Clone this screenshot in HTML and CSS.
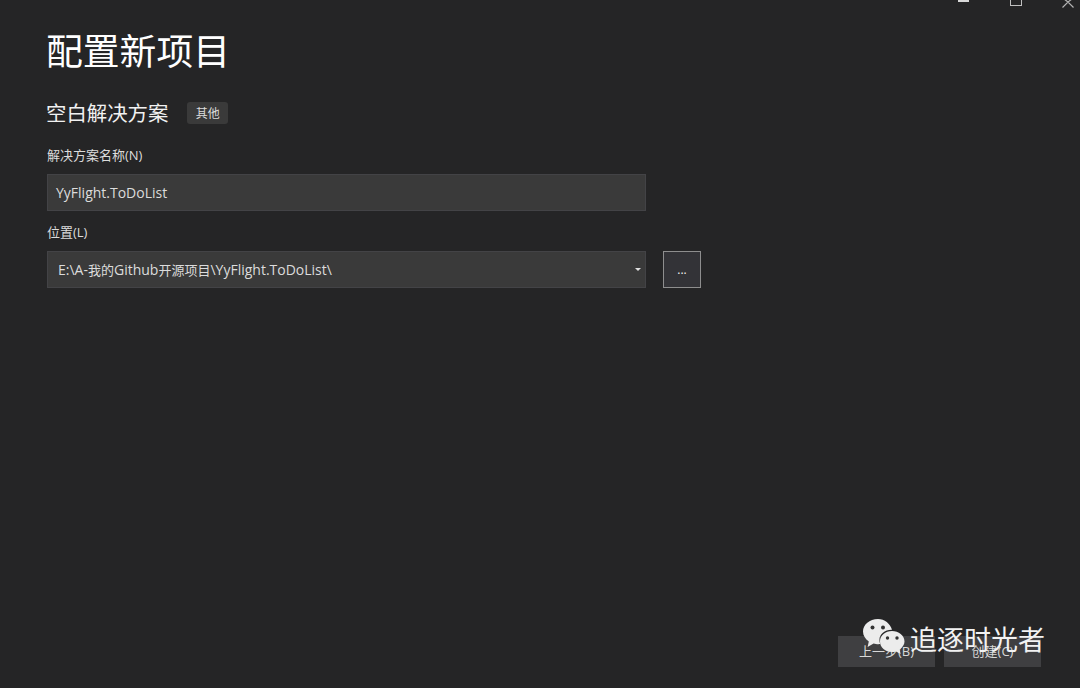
FILE: index.html
```html
<!DOCTYPE html>
<html lang="zh-CN">
<head>
<meta charset="utf-8">
<title>配置新项目</title>
<link rel="stylesheet" href="styles.css">
</head>
<body>
<div class="window">
  <div class="controls" aria-hidden="true">
    <span class="ctl ctl-min"></span>
    <span class="ctl ctl-max"></span>
    <svg class="ctl-close" width="14" height="8" viewBox="0 0 14 8"><path d="M1.5 7.5 L7 2 L12.5 7.5 M3 -1 L7 2 L11 -1" fill="none" stroke="#b4b4b4" stroke-width="1.2"/></svg>
  </div>
  <main class="content">
    <h1 class="title">配置新项目</h1>
    <div class="subtitle-row">
      <h2 class="subtitle">空白解决方案</h2>
      <span class="tag">其他</span>
    </div>
    <label class="label label-first">解决方案名称(N)</label>
    <div class="field field-name">YyFlight.ToDoList</div>
    <label class="label label-second">位置(L)</label>
    <div class="location-row">
      <div class="field field-loc">
        <span>E:\A-<span class="cjk">我的</span>Github<span class="cjk">开源项目</span>\YyFlight.ToDoList\</span>
        <span class="caret"></span>
      </div>
      <button class="browse">...</button>
    </div>
  </main>
  <footer class="footer">
    <button class="btn">上一步(B)</button>
    <button class="btn">创建(C)</button>
  </footer>
  <div class="watermark">
    <svg class="wechat" width="44" height="40" viewBox="0 0 44 40">
      <path d="M16 1 C7.5 1 1 6.8 1 13.5 C1 17.6 3.3 21 6.8 23.4 L5.6 29 L11.6 25.5 C13.2 26 14.6 26.2 16.5 26.2 C17.2 26.2 17.6 26.2 18.2 26.1 C17.6 24.6 17.4 23.4 17.4 22 C17.4 16 23 11.6 30 11.8 C28.2 5.6 22.6 1 16 1 Z" fill="#ececec"/>
      <path d="M42.5 23.5 C42.5 17.6 36.6 13 30 13 C23.4 13 18 17.6 18 23.5 C18 29.4 23.4 34 30 34 C31.4 34 32.8 33.8 34 33.4 L38.6 36 L37.6 31.4 C40.6 29.4 42.5 26.6 42.5 23.5 Z" fill="#ececec"/>
      <circle cx="10.5" cy="9.5" r="2" fill="#333"/>
      <circle cx="21" cy="9.5" r="2" fill="#333"/>
      <circle cx="25.5" cy="20" r="1.7" fill="#333"/>
      <circle cx="35" cy="20" r="1.7" fill="#333"/>
    </svg>
    <span class="wm-text">追逐时光者</span>
  </div>
</div>
</body>
</html>
```
FILE: styles.css
```css
* { box-sizing: border-box; }
html, body { margin: 0; padding: 0; height: 100%; }
body {
  background: #252526;
  color: #f1f1f1;
  font-family: "Open Sans", "Noto Sans CJK SC", sans-serif;
  overflow: hidden;
}
.window {
  position: relative;
  width: 1080px;
  height: 688px;
  display: flex;
  flex-direction: column;
  overflow: hidden;
}
.controls { position: absolute; inset: 0 0 auto 0; height: 10px; }
.ctl { position: absolute; display: block; }
.ctl-min { left: 958px; top: 0; width: 11px; height: 2px; background: #d8d8d8; }
.ctl-max { left: 1010px; top: -6px; width: 12px; height: 12px; border: 1px solid #c0c0c0; }
.ctl-close { position: absolute; left: 1061px; top: 0; }
.content { flex: 1; padding: 0 0 0 47px; }
.title {
  margin: 27px 0 0 -1px;
  font-size: 36.8px;
  line-height: 48px;
  font-weight: 400;
  color: #ffffff;
}
.subtitle-row {
  display: flex;
  align-items: center;
  margin-top: 23px;
  height: 30px;
}
.subtitle {
  margin: 0 0 0 -1px;
  font-size: 20.4px;
  line-height: 30px;
  font-weight: 400;
  color: #f1f1f1;
}
.tag {
  margin-left: 19px;
  width: 41px;
  height: 22px;
  background: #3a3a3a;
  border-radius: 3px;
  font-size: 12px;
  line-height: 23px;
  text-align: center;
  color: #dcdcdc;
}
.label {
  display: block;
  font-size: 13px;
  line-height: 18px;
  color: #dcdcdc;
}
.label-first { margin-top: 18px; }
.label-second { margin-top: 12px; }
.field {
  width: 599px;
  height: 37px;
  background: #3a3a3a;
  border: 1px solid #434346;
  font-size: 14px;
  line-height: 35px;
  color: #dcdcdc;
}
.field-name { margin-top: 10px; padding-left: 8px; }
.location-row { display: flex; align-items: flex-start; margin-top: 10px; }
.field-loc {
  display: flex;
  align-items: center;
  justify-content: space-between;
  padding: 0 4px 0 10px;
}
.cjk { font-size: 13px; }
.caret {
  width: 0;
  height: 0;
  border-left: 3.5px solid transparent;
  border-right: 3.5px solid transparent;
  border-top: 3.5px solid #e0e0e0;
}
.browse {
  margin-left: 17px;
  width: 38px;
  height: 37px;
  background: #333337;
  border: 1px solid #8e8e8e;
  color: #f1f1f1;
  font: 12px/35px "Open Sans", sans-serif;
  padding: 0;
}
.footer {
  display: flex;
  justify-content: flex-end;
  gap: 9px;
  padding: 0 39px 21px 0;
}
.btn {
  width: 97px;
  height: 31px;
  background: #3f3f41;
  border: 0;
  padding: 0;
  color: #d8d8d8;
  font: 13px/31px "Open Sans", "Noto Sans CJK SC", sans-serif;
}
.watermark {
  position: absolute;
  left: 862px;
  top: 618px;
  display: flex;
  align-items: flex-start;
}
.wechat { display: block; }
.wm-text {
  margin-left: 4px;
  margin-top: 2px;
  font-size: 27px;
  line-height: 40px;
  color: #f2f2f2;
  white-space: nowrap;
}
```
